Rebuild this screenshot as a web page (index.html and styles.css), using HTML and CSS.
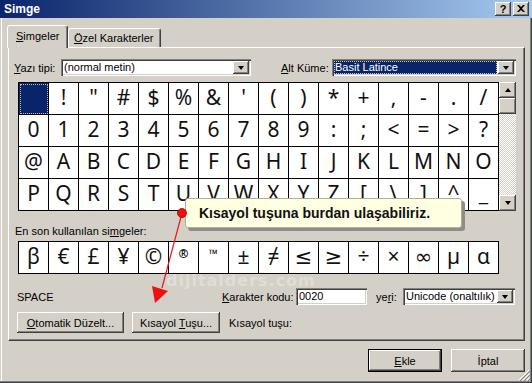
FILE: index.html
```html
<!DOCTYPE html>
<html lang="tr">
<head>
<meta charset="utf-8">
<title>Simge</title>
<link rel="stylesheet" href="styles.css">
</head>
<body>
<div class="window">
  <div class="titlebar">
    <span class="title">Simge</span>
    <div class="tb-btns">
      <span class="tb-btn help">?</span>
      <span class="tb-btn">
        <svg width="8" height="7" viewBox="0 0 8 7"><path d="M0 0h2l2 2 2-2h2L5 3.5 8 7H6L4 5 2 7H0l3-3.5z" fill="#000"/></svg>
      </span>
    </div>
  </div>
  <div class="client">
    <div class="tabs">
      <div class="tab active"><span><u>S</u>imgeler</span></div>
      <div class="tab"><span><u>Ö</u>zel Karakterler</span></div>
    </div>
    <div class="panel">
      <div class="font-row">
        <span class="lbl-font"><u>Y</u>azı tipi:</span>
        <div class="combo combo-font"><span class="combo-text">(normal metin)</span><span class="dd"><i class="tri-down"></i></span></div>
        <span class="lbl-alt"><u>A</u>lt Küme:</span>
        <div class="combo combo-alt"><span class="combo-text hl">Basit Latince</span><span class="dd"><i class="tri-down"></i></span></div>
      </div>
      <div class="grid-wrap">
        <div class="grid">
          <span class="cell sel"></span><span class="cell">!</span><span class="cell">&quot;</span><span class="cell">#</span><span class="cell">$</span><span class="cell">%</span><span class="cell">&amp;</span><span class="cell">'</span><span class="cell">(</span><span class="cell">)</span><span class="cell">*</span><span class="cell">+</span><span class="cell">,</span><span class="cell">-</span><span class="cell">.</span><span class="cell">/</span>
          <span class="cell">0</span><span class="cell">1</span><span class="cell">2</span><span class="cell">3</span><span class="cell">4</span><span class="cell">5</span><span class="cell">6</span><span class="cell">7</span><span class="cell">8</span><span class="cell">9</span><span class="cell">:</span><span class="cell">;</span><span class="cell">&lt;</span><span class="cell">=</span><span class="cell">&gt;</span><span class="cell">?</span>
          <span class="cell">@</span><span class="cell">A</span><span class="cell">B</span><span class="cell">C</span><span class="cell">D</span><span class="cell">E</span><span class="cell">F</span><span class="cell">G</span><span class="cell">H</span><span class="cell">I</span><span class="cell">J</span><span class="cell">K</span><span class="cell">L</span><span class="cell">M</span><span class="cell">N</span><span class="cell">O</span>
          <span class="cell">P</span><span class="cell">Q</span><span class="cell">R</span><span class="cell">S</span><span class="cell">T</span><span class="cell">U</span><span class="cell">V</span><span class="cell">W</span><span class="cell">X</span><span class="cell">Y</span><span class="cell">Z</span><span class="cell">[</span><span class="cell">\</span><span class="cell">]</span><span class="cell">^</span><span class="cell">_</span>
        </div>
        <div class="scrollbar">
          <span class="sb-btn"><i class="tri-up"></i></span>
          <span class="sb-thumb"></span>
          <span class="sb-track"></span>
          <span class="sb-btn"><i class="tri-down"></i></span>
        </div>
      </div>
      <div class="recent-label">En son kullanılan si<u>m</u>geler:</div>
      <div class="recent">
        <span class="cell">β</span><span class="cell">€</span><span class="cell">£</span><span class="cell">¥</span><span class="cell">©</span><span class="cell small">®</span><span class="cell small">™</span><span class="cell">±</span><span class="cell">≠</span><span class="cell">≤</span><span class="cell">≥</span><span class="cell">÷</span><span class="cell">×</span><span class="cell">∞</span><span class="cell">µ</span><span class="cell">α</span>
      </div>
      <div class="info-row">
        <span class="char-name">SPACE</span>
        <span class="lbl-code"><u>K</u>arakter kodu:</span>
        <div class="input">0020</div>
        <span class="lbl-from">ye<u>r</u>i:</span>
        <div class="combo combo-from"><span class="combo-text">Unicode (onaltılık)</span><span class="dd"><i class="tri-down"></i></span></div>
      </div>
      <div class="btn-row">
        <span class="btn btn-auto"><span><u>O</u>tomatik Düzelt...</span></span>
        <span class="btn btn-key"><span>Kısayol <u>T</u>uşu...</span></span>
        <span class="lbl-key">Kısayol tuşu:</span>
      </div>
    </div>
    <div class="bottom-row">
      <span class="btn btn-default"><span><u>E</u>kle</span></span>
      <span class="btn btn-cancel"><span>İptal</span></span>
    </div>
  </div>

  <div class="watermark">dijitalders.com</div>
  <div class="callout">Kısayol tuşuna burdan ulaşabiliriz.</div>
  <svg class="overlay" width="532" height="383" viewBox="0 0 532 383">
    <line x1="182" y1="213" x2="162" y2="288" stroke="#e8141b" stroke-width="1.2"/>
    <polygon points="152,286 168,291 155,303" fill="#ee1111"/>
    <circle cx="182" cy="213" r="4.5" fill="#f01010" stroke="#a00000" stroke-width="0.8"/>
  </svg>
  <svg class="grip" width="12" height="12" viewBox="0 0 12 12">
    <path d="M11 1L1 11M11 5L5 11M11 9L9 11" stroke="#fff" stroke-width="1"/>
    <path d="M12 2L2 12M12 6L6 12M12 10L10 12" stroke="#808080" stroke-width="1"/>
  </svg>
</div>
</body>
</html>
```

FILE: styles.css
```css
* { box-sizing: border-box; }

body {
  margin: 0;
  background: #d4d0c8;
  font: 11px "Liberation Sans", Arial, sans-serif;
  color: #000;
}

u { text-decoration: underline; text-underline-offset: 1px; }

.window {
  position: relative;
  width: 532px;
  height: 383px;
  overflow: hidden;
  background: #d4d0c8;
  box-shadow: inset -1px -1px #404040, inset -2px -2px #808080, inset 1px 0 #d4d0c8, inset 2px 0 #fff;
}

/* title bar */
.titlebar {
  height: 18px;
  background: linear-gradient(to right, #0a246a, #a6caf0);
  display: flex;
  align-items: center;
  justify-content: space-between;
  padding: 0 3px 0 4px;
}
.title {
  color: #fff;
  font-weight: bold;
  font-size: 12px;
}
.tb-btns { display: flex; gap: 2px; }
.tb-btn {
  width: 16px;
  height: 14px;
  background: #d4d0c8;
  box-shadow: inset -1px -1px #404040, inset 1px 1px #fff, inset -2px -2px #808080;
  display: flex;
  align-items: center;
  justify-content: center;
  font-weight: bold;
  font-size: 11px;
  padding-bottom: 1px;
}

/* client area */
.client { padding: 7px 7px 0 8px; }

.tabs {
  display: flex;
  align-items: flex-end;
  height: 22px;
}
.tab {
  position: relative;
  height: 19px;
  width: 93px;
  border-top: 1px solid #fff;
  border-left: 1px solid #fff;
  border-right: 1px solid #404040;
  border-radius: 3px 3px 0 0;
  box-shadow: inset -1px 0 #808080;
  display: flex;
  align-items: center;
  padding-left: 5px;
  background: #d4d0c8;
}
.tab.active {
  z-index: 1;
  width: 61px;
  height: 23px;
  margin-left: -1px;
  margin-bottom: -1px;
  padding-left: 8px;
  padding-bottom: 2px;
}

.panel {
  width: 517px;
  height: 294px;
  border-top: 1px solid #fff;
  border-left: 1px solid #fff;
  border-right: 1px solid #404040;
  border-bottom: 1px solid #404040;
  box-shadow: inset -1px -1px #808080;
  padding-left: 5px;
}

/* font row */
.font-row {
  display: flex;
  align-items: center;
  height: 17px;
  margin-top: 11px;
}
.lbl-font { width: 47px; }
.lbl-alt { width: 51px; margin-left: 30px; }

.combo {
  height: 17px;
  display: flex;
  align-items: center;
  background: #fff;
  box-shadow: inset 1px 1px #808080, inset 2px 2px #404040, inset -1px -1px #fff, inset -2px -2px #d4d0c8;
  padding: 2px;
}
.combo-font { width: 190px; }
.combo-alt { width: 184px; }
.combo-from { width: 112px; }
.combo-text {
  flex: 1;
  height: 13px;
  line-height: 13px;
  padding-left: 1px;
  white-space: nowrap;
  overflow: hidden;
}
.combo-text.hl {
  background: #0a246a;
  color: #fff;
  outline: 1px dotted #c8c8c8;
  outline-offset: -1px;
  margin-right: 1px;
}
.dd {
  width: 16px;
  height: 13px;
  background: #d4d0c8;
  box-shadow: inset -1px -1px #404040, inset 1px 1px #fff, inset -2px -2px #808080;
  display: flex;
  align-items: center;
  justify-content: center;
}
.tri-down {
  width: 0; height: 0;
  border-left: 3.5px solid transparent;
  border-right: 3.5px solid transparent;
  border-top: 4px solid #000;
}
.tri-up {
  width: 0; height: 0;
  border-left: 3.5px solid transparent;
  border-right: 3.5px solid transparent;
  border-bottom: 4px solid #000;
}

/* grid */
.grid-wrap {
  display: flex;
  margin-top: 6px;
  margin-left: 4px;
}
.grid, .recent {
  display: grid;
  grid-template-columns: repeat(16, 30px);
  grid-auto-rows: 32px;
  border-top: 1px solid #000;
  border-left: 1px solid #000;
  width: 481px;
  font-family: "Noto Sans", "DejaVu Sans", sans-serif;
  font-size: 21px;
}
.cell {
  background: #fff;
  border-right: 1px solid #000;
  border-bottom: 1px solid #000;
  display: flex;
  align-items: center;
  justify-content: center;
  line-height: 1;
  padding-bottom: 2px;
  color: #111;
}
.cell.sel {
  background: #0a246a;
  outline: 1px dotted #b8b8c8;
  outline-offset: -2px;
}
.cell.small {
  font-size: 12px;
  align-items: flex-start;
  padding-top: 6px;
  font-weight: bold;
}

.scrollbar {
  width: 17px;
  height: 129px;
  display: flex;
  flex-direction: column;
}
.sb-btn {
  height: 16px;
  background: #d4d0c8;
  box-shadow: inset -1px -1px #404040, inset 1px 1px #fff, inset -2px -2px #808080;
  display: flex;
  align-items: center;
  justify-content: center;
}
.sb-thumb {
  height: 16px;
  background: #d4d0c8;
  box-shadow: inset -1px -1px #404040, inset 1px 1px #fff, inset -2px -2px #808080;
}
.sb-track {
  flex: 1;
  background: repeating-conic-gradient(#fff 0 25%, #d4d0c8 0 50%) 0 0 / 2px 2px;
}

.recent-label {
  margin-top: 14px;
  height: 13px;
  line-height: 13px;
  padding-left: 1px;
}
.recent {
  margin-top: 3px;
  margin-left: 4px;
}

/* info row */
.info-row {
  display: flex;
  align-items: center;
  height: 17px;
  margin-top: 14px;
}
.char-name { width: 208px; padding-left: 3px; }
.lbl-code { width: 74px; }
.input {
  width: 71px;
  height: 17px;
  line-height: 13px;
  background: #fff;
  padding: 2px 3px;
  box-shadow: inset 1px 1px #808080, inset 2px 2px #404040, inset -1px -1px #fff, inset -2px -2px #d4d0c8;
}
.lbl-from { width: 27px; margin-left: 9px; }

/* buttons */
.btn-row {
  display: flex;
  align-items: center;
  height: 21px;
  margin-top: 7px;
  margin-left: 3px;
}
.btn {
  height: 21px;
  display: flex;
  align-items: center;
  justify-content: center;
  background: #d4d0c8;
  box-shadow: inset -1px -1px #404040, inset 1px 1px #fff, inset -2px -2px #808080;
}
.btn-auto { width: 107px; }
.btn-key { width: 88px; margin-left: 8px; }
.lbl-key { margin-left: 9px; }

.bottom-row {
  display: flex;
  justify-content: flex-end;
  gap: 9px;
  margin-top: 8px;
}
.bottom-row .btn { width: 74px; height: 23px; }
.btn-default {
  box-shadow: inset 0 0 0 1px #000, inset -2px -2px #404040, inset 2px 2px #fff, inset -3px -3px #808080;
}

/* overlays */
.watermark {
  position: absolute;
  left: 166px;
  top: 274px;
  font: bold 16px "DejaVu Sans", sans-serif;
  line-height: 14px;
  letter-spacing: 1px;
  color: rgba(255, 255, 255, 0.3);
}
.callout {
  position: absolute;
  left: 185px;
  top: 198px;
  width: 277px;
  height: 30px;
  background: #ffffe1;
  border: 1px solid #b0ad98;
  border-radius: 3px;
  box-shadow: 3px 3px 0 #8e8c86;
  padding-left: 13px;
  font: bold 14px "Liberation Sans", Arial, sans-serif;
  line-height: 28px;
  color: #111;
}
.overlay {
  position: absolute;
  left: 0;
  top: 0;
  pointer-events: none;
}
.grip {
  position: absolute;
  right: 2px;
  bottom: 2px;
}
```
